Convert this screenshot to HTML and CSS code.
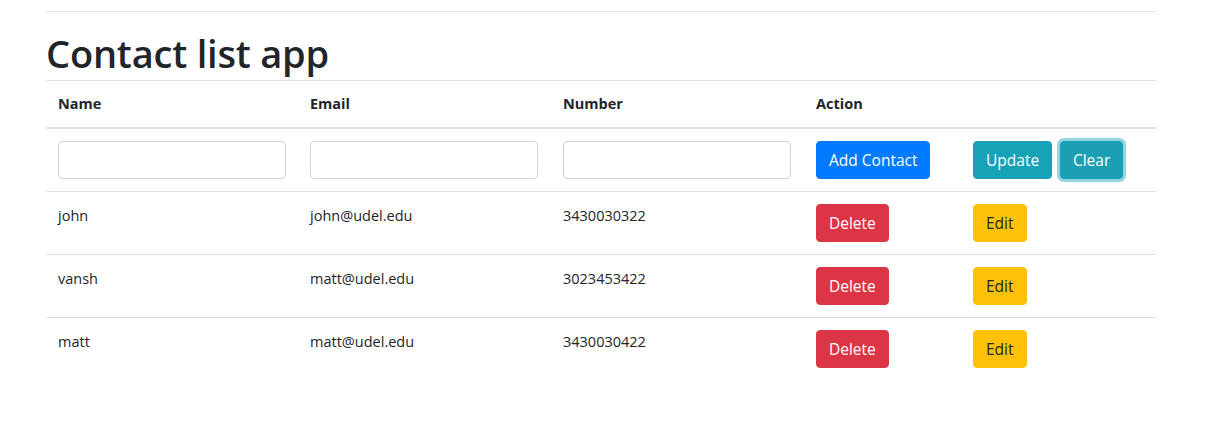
FILE: index.html
```html
<!DOCTYPE html>
<html>
<head>
<meta charset="utf-8">
<link rel="stylesheet" href="styles.css">
</head>
<body>
<div class="container">
  <hr class="rule">
  <h1 class="title">Contact list app</h1>
  <table class="table">
    <thead>
      <tr>
        <th class="c1">Name</th>
        <th class="c2">Email</th>
        <th class="c3">Number</th>
        <th class="c4">Action</th>
        <th class="c5"></th>
      </tr>
    </thead>
    <tbody>
      <tr>
        <td><input class="field" type="text"></td>
        <td><input class="field" type="text"></td>
        <td><input class="field" type="text"></td>
        <td><button class="btn btn-primary">Add Contact</button></td>
        <td><button class="btn btn-info">Update</button> <button class="btn btn-info focus">Clear</button></td>
      </tr>
      <tr>
        <td>john</td>
        <td>john@udel.edu</td>
        <td>3430030322</td>
        <td><button class="btn btn-danger">Delete</button></td>
        <td><button class="btn btn-warning">Edit</button></td>
      </tr>
      <tr>
        <td>vansh</td>
        <td>matt@udel.edu</td>
        <td>3023453422</td>
        <td><button class="btn btn-danger">Delete</button></td>
        <td><button class="btn btn-warning">Edit</button></td>
      </tr>
      <tr>
        <td>matt</td>
        <td>matt@udel.edu</td>
        <td>3430030422</td>
        <td><button class="btn btn-danger">Delete</button></td>
        <td><button class="btn btn-warning">Edit</button></td>
      </tr>
    </tbody>
  </table>
</div>
</body>
</html>
```

FILE: styles.css
```css
* { box-sizing: border-box; }
html, body { margin: 0; padding: 0; background: #fff; }
body {
  font-family: "Open Sans", "Noto Sans", sans-serif;
  font-size: 14.5px;
  line-height: 24px;
  color: #212529;
}
.container {
  width: 1110px;
  margin-left: 46px;
}
.rule {
  margin: 11px 0 0 0;
  border: 0;
  border-top: 1px solid rgba(0,0,0,.1);
  height: 0;
}
.title {
  margin: 15px 0 0 0;
  font-size: 38px;
  font-weight: 600;
  line-height: 52px;
  letter-spacing: -0.2px;
  height: 53px;
}
.table {
  width: 1110px;
  border-collapse: collapse;
  table-layout: fixed;
}
.table th, .table td {
  padding: 12px;
  text-align: left;
  vertical-align: top;
  border-top: 1px solid #dee2e6;
}
.table th {
  font-weight: 700;
  font-size: 14.5px;
  padding: 11px 12px 11px;
  border-bottom: 2px solid #dee2e6;
}
.table tbody tr:first-child td { border-top: 0; padding-top: 12px; }
.c1 { width: 252px; }
.c2 { width: 253px; }
.c3 { width: 253px; }
.c4 { width: 157px; }
.c5 { width: 195px; }
.field {
  display: block;
  width: 228px;
  height: 38px;
  border: 1px solid #ced4da;
  border-radius: 4px;
  background: #fff;
  font: inherit;
  padding: 6px 12px;
}
.btn {
  display: inline-block;
  height: 38px;
  padding: 0 12px;
  border: 1px solid transparent;
  border-radius: 4px;
  font-family: inherit;
  font-size: 15.5px;
  line-height: 36px;
  color: #fff;
  vertical-align: top;
  cursor: pointer;
}
.btn-primary { background: #007bff; border-color: #007bff; }
.btn-info { background: #17a2b8; border-color: #17a2b8; }
.btn-info.focus { background: #1a9fb3; box-shadow: 0 0 0 3px rgba(58,176,195,.55); margin-left: 4px; }
.btn-danger { background: #dc3545; border-color: #dc3545; }
.btn-warning { background: #ffc107; border-color: #ffc107; color: #212529; }
```
